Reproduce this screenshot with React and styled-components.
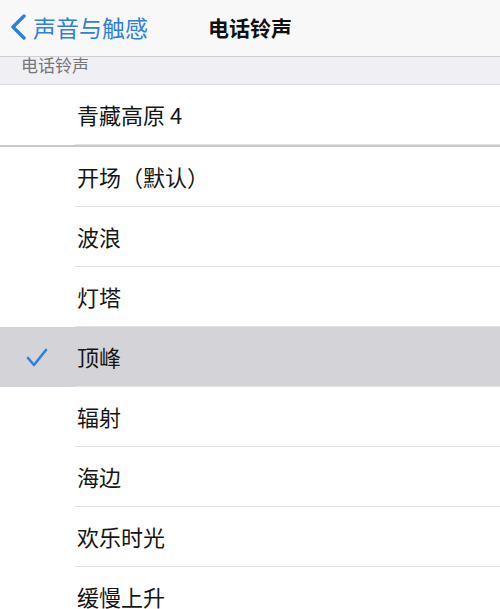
import styled, { createGlobalStyle } from "styled-components";

const GlobalStyle = createGlobalStyle`
  body {
    margin: 0;
    background: #ffffff;
    font-family: "Noto Sans CJK SC", "Noto Sans", sans-serif;
    overflow: hidden;
  }
`;

const tones = ["青藏高原 4"];
const ringtones = [
  "开场（默认）",
  "波浪",
  "灯塔",
  "顶峰",
  "辐射",
  "海边",
  "欢乐时光",
  "缓慢上升",
];
const selected = "顶峰";

const App = () => {
  return (
    <Screen>
      <GlobalStyle />
      <NavBar>
        <BackButton>
          <svg width="19" height="26" viewBox="0 0 19 26">
            <path
              d="M15 2 L4 13 L15 24"
              fill="none"
              stroke="#2f7fe0"
              strokeWidth="3.4"
              strokeLinecap="round"
              strokeLinejoin="round"
            />
          </svg>
          <BackText>声音与触感</BackText>
        </BackButton>
        <NavTitle>电话铃声</NavTitle>
      </NavBar>
      <SectionHeader>电话铃声</SectionHeader>
      <Group $thick>
        {tones.map((t) => (
          <Row key={t}>
            <Check />
            <Label>{t}</Label>
          </Row>
        ))}
      </Group>
      <Group>
        {ringtones.map((t, i) => (
          <Row key={t} $active={t === selected} $last={i === ringtones.length - 1}>
            <Check>
              {t === selected && (
                <svg width="22" height="20" viewBox="0 0 22 20">
                  <path
                    d="M2 10 L8 17 L20 2"
                    fill="none"
                    stroke="#2f7fe0"
                    strokeWidth="2.6"
                    strokeLinecap="round"
                    strokeLinejoin="round"
                  />
                </svg>
              )}
            </Check>
            <Label>{t}</Label>
          </Row>
        ))}
      </Group>
    </Screen>
  );
};

export default App;

const Screen = styled.div`
  width: 500px;
  height: 609px;
  overflow: hidden;
  background: #ffffff;
`;

const NavBar = styled.div`
  position: relative;
  height: 56px;
  display: flex;
  align-items: center;
  justify-content: center;
  background: #f8f8f8;
  border-bottom: 1px solid #cfcfd3;
`;

const BackButton = styled.div`
  position: absolute;
  left: 9px;
  top: 0;
  height: 56px;
  display: flex;
  align-items: center;
  gap: 5px;
  margin-top: -1px;
`;

const BackText = styled.span`
  font-size: 23px;
  color: #2f7fe0;
  letter-spacing: 0px;
`;

const NavTitle = styled.div`
  font-size: 21px;
  font-weight: 700;
  color: #111111;
  margin-top: -3px;
`;

const SectionHeader = styled.div`
  height: 27px;
  background: #efeff4;
  color: #75757a;
  font-size: 17px;
  line-height: 16px;
  padding-left: 21px;
  overflow: hidden;
  border-bottom: 1px solid #dcdce0;
`;

const Group = styled.div`
  background: #ffffff;
  border-bottom: ${(p) => (p.$thick ? "2px solid #c9c9cc" : "none")};
`;

const Row = styled.div`
  position: relative;
  height: 60px;
  display: flex;
  align-items: center;
  background: ${(p) => (p.$active ? "#d3d3d8" : "#ffffff")};

  &::after {
    content: "";
    display: ${(p) => (p.$last ? "none" : "block")};
    position: absolute;
    left: 75px;
    right: 0;
    bottom: 0;
    height: 1px;
    background: #e2e2e5;
  }
`;

const Check = styled.div`
  width: 77px;
  display: flex;
  justify-content: flex-start;
  padding-left: 26px;
  box-sizing: border-box;
  padding-top: 2px;
`;

const Label = styled.span`
  font-size: 22px;
  color: #161616;
  margin-top: -2px;
`;
